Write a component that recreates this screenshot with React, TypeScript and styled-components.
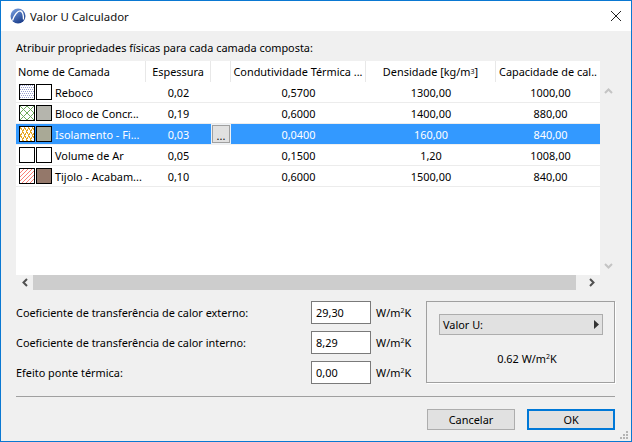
import styled, { createGlobalStyle } from "styled-components";

const GlobalStyle = createGlobalStyle`
  html, body {
    margin: 0;
    padding: 0;
    background: #f0f0f0;
  }
  * {
    box-sizing: border-box;
  }
`;

type Hatch = "dots" | "cross" | "wave" | "none" | "diag";

type Layer = {
  name: string;
  thickness: string;
  conductivity: string;
  density: string;
  capacity: string;
  hatch: Hatch;
  fill: string;
  selected?: boolean;
};

const layers: Layer[] = [
  { name: "Reboco", thickness: "0,02", conductivity: "0,5700", density: "1300,00", capacity: "1000,00", hatch: "dots", fill: "#ffffff" },
  { name: "Bloco de Concr...", thickness: "0,19", conductivity: "0,6000", density: "1400,00", capacity: "880,00", hatch: "cross", fill: "#b5b5ad" },
  { name: "Isolamento - Fi...", thickness: "0,03", conductivity: "0,0400", density: "160,00", capacity: "840,00", hatch: "wave", fill: "#a9a996", selected: true },
  { name: "Volume de Ar", thickness: "0,05", conductivity: "0,1500", density: "1,20", capacity: "1008,00", hatch: "none", fill: "#ffffff" },
  { name: "Tijolo - Acabam...", thickness: "0,10", conductivity: "0,6000", density: "1500,00", capacity: "840,00", hatch: "diag", fill: "#94786a" },
];

const coefficients = [
  { label: "Coeficiente de transferência de calor externo:", value: "29,30" },
  { label: "Coeficiente de transferência de calor interno:", value: "8,29" },
  { label: "Efeito ponte térmica:", value: "0,00" },
];

// each hatch is a 1px pattern, one colour and a test per pixel
const hatches: Record<Hatch, { color: string; on: (x: number, y: number) => boolean }> = {
  none: { color: "#fff", on: () => false },
  dots: { color: "#9aa0d0", on: (x, y) => y % 2 === 0 && (x + y / 2) % 2 === 0 },
  cross: { color: "#6dab5a", on: (x, y) => (x - y + 14) % 7 === 0 || (x + y + 1) % 7 === 0 },
  wave: { color: "#e6a726", on: (x, y) => (x * 2 + y) % 8 < 2 || (x * 2 - y + 32) % 8 < 2 },
  diag: { color: "#fa8078", on: (x, y) => (x + y) % 4 === 3 },
};

const HatchSwatch = ({ hatch }: { hatch: Hatch }) => {
  const { color, on } = hatches[hatch];
  const cells = Array.from({ length: 196 }, (_, i) => ({ x: i % 14, y: Math.floor(i / 14) }));
  return (
    <Swatch>
      <svg width="14" height="14" viewBox="0 0 14 14" shapeRendering="crispEdges">
        {cells
          .filter((c) => on(c.x, c.y))
          .map((c) => (
            <rect key={`${c.x}-${c.y}`} x={c.x} y={c.y} width="1" height="1" fill={color} />
          ))}
      </svg>
    </Swatch>
  );
};

const App = () => {
  return (
    <Window>
      <GlobalStyle />
      <TitleBar>
        <TitleGroup>
          <svg width="16" height="16" viewBox="0 0 16 16">
            <defs>
              <linearGradient id="sphere" x1="0" y1="0" x2="0.6" y2="1">
                <stop offset="0" stopColor="#7fa6e6" />
                <stop offset="1" stopColor="#1c3f8c" />
              </linearGradient>
            </defs>
            <circle cx="8" cy="8" r="7.5" fill="url(#sphere)" />
            <path d="M2.5 12.5C4 7 8 2.5 10.5 3C13 3.5 13.5 8 13.5 11.5" stroke="#fff" strokeWidth="1.3" fill="none" />
          </svg>
          <Title>Valor U Calculador</Title>
        </TitleGroup>
        <svg width="12" height="12" viewBox="0 0 12 12">
          <path d="M1 1L11 11M11 1L1 11" stroke="#222" strokeWidth="1" fill="none" />
        </svg>
      </TitleBar>

      <Body>
        <Intro>Atribuir propriedades físicas para cada camada composta:</Intro>

        <TableArea>
          <Table>
            <HeaderRow>
              <HeaderCell $align="left">Nome de Camada</HeaderCell>
              <HeaderCell>Espessura</HeaderCell>
              <HeaderCell />
              <HeaderCell>Condutividade Térmica ...</HeaderCell>
              <HeaderCell>
                Densidade [kg/m<Sup>3</Sup>]
              </HeaderCell>
              <HeaderCell $last>Capacidade de cal..</HeaderCell>
            </HeaderRow>
            {layers.map((layer) => (
              <Row key={layer.name} $selected={layer.selected}>
                <NameCell>
                  <HatchSwatch hatch={layer.hatch} />
                  <Swatch style={{ background: layer.fill }} />
                  <LayerName>{layer.name}</LayerName>
                </NameCell>
                <Cell>{layer.thickness}</Cell>
                <Cell>{layer.selected && <DotsButton>...</DotsButton>}</Cell>
                <Cell>{layer.conductivity}</Cell>
                <Cell>{layer.density}</Cell>
                <CapacityCell>{layer.capacity}</CapacityCell>
              </Row>
            ))}
          </Table>
          <VerticalBar>
            <svg width="9" height="6" viewBox="0 0 9 6">
              <path d="M1 5L4.5 1.5L8 5" stroke="#c4c4c4" strokeWidth="2" fill="none" />
            </svg>
            <svg width="9" height="6" viewBox="0 0 9 6">
              <path d="M1 1L4.5 4.5L8 1" stroke="#c4c4c4" strokeWidth="2" fill="none" />
            </svg>
          </VerticalBar>
        </TableArea>

        <HorizontalBar>
          <ArrowSlot>
            <svg width="6" height="9" viewBox="0 0 6 9">
              <path d="M5 1L1.5 4.5L5 8" stroke="#505050" strokeWidth="2" fill="none" />
            </svg>
          </ArrowSlot>
          <Track />
          <ArrowSlot $wide>
            <svg width="6" height="9" viewBox="0 0 6 9">
              <path d="M1 1L4.5 4.5L1 8" stroke="#505050" strokeWidth="2" fill="none" />
            </svg>
          </ArrowSlot>
        </HorizontalBar>

        <BottomArea>
          <Coefficients>
            {coefficients.map((item) => (
              <CoefRow key={item.label}>
                <CoefLabel>{item.label}</CoefLabel>
                <ValueInput>{item.value}</ValueInput>
                <Unit>
                  W/m<Sup>2</Sup>K
                </Unit>
              </CoefRow>
            ))}
          </Coefficients>
          <ResultBox>
            <PopupButton>
              Valor U:
              <svg width="5" height="9" viewBox="0 0 5 9">
                <path d="M0 0L5 4.5L0 9Z" fill="#333" />
              </svg>
            </PopupButton>
            <ResultValue>
              0.62 W/m<Sup>2</Sup>K
            </ResultValue>
          </ResultBox>
        </BottomArea>

        <Separator />

        <Footer>
          <DialogButton>Cancelar</DialogButton>
          <DialogButton $primary>OK</DialogButton>
        </Footer>
      </Body>
      <Grip>
        <svg width="12" height="12" viewBox="0 0 12 12">
          <path d="M8 2h2v2h-2zM5 5h2v2h-2zM8 5h2v2h-2zM2 8h2v2h-2zM5 8h2v2h-2zM8 8h2v2h-2z" fill="#b4b4b4" />
        </svg>
      </Grip>
    </Window>
  );
};

const Window = styled.div`
  position: relative;
  width: 632px;
  height: 442px;
  display: flex;
  flex-direction: column;
  border: 1px solid #0a78d2;
  background: #f0f0f0;
  font-family: "Noto Sans", "Liberation Sans", sans-serif;
  font-size: 10.9px;
  color: #000;
  overflow: hidden;
`;

const TitleBar = styled.div`
  height: 30px;
  flex: none;
  background: #fff;
  display: flex;
  align-items: center;
  justify-content: space-between;
  padding: 0 9px 0 9px;
`;

const TitleGroup = styled.div`
  display: flex;
  align-items: center;
  gap: 4px;
`;

const Title = styled.span`
  font-size: 11.4px;
  color: #111;
`;

const Body = styled.div`
  flex: 1;
  display: flex;
  flex-direction: column;
  padding: 0 16px 0 15px;
`;

const Intro = styled.div`
  height: 30px;
  line-height: 15px;
  padding-top: 9px;
`;

const TableArea = styled.div`
  display: flex;
  height: 214px;
  margin-right: -16px;
`;

const Table = styled.div`
  width: 584px;
  flex: none;
  background: #fff;
`;

const columns = "130px 65px 20px 135px 130px 104px";

const HeaderRow = styled.div`
  display: grid;
  grid-template-columns: ${columns};
  height: 21px;
`;

const HeaderCell = styled.div<{ $align?: string; $last?: boolean }>`
  display: flex;
  align-items: center;
  justify-content: ${(p) => (p.$align === "left" ? "flex-start" : "center")};
  padding-left: ${(p) => (p.$align === "left" ? "2px" : "0")};
  border-right: ${(p) => (p.$last ? "none" : "1px solid #e8e8e8")};
  white-space: nowrap;
  overflow: hidden;
`;

const Row = styled.div<{ $selected?: boolean }>`
  display: grid;
  grid-template-columns: ${columns};
  height: 21px;
  align-items: center;
  border-bottom: 1px solid ${(p) => (p.$selected ? "#f0f0f0" : "#ececec")};
  background: ${(p) => (p.$selected ? "#3399ff" : "#fff")};
  color: ${(p) => (p.$selected ? "#fff" : "#000")};
`;

const Cell = styled.div`
  display: flex;
  justify-content: center;
  align-items: center;
  white-space: nowrap;
`;

const CapacityCell = styled(Cell)`
  padding-left: 5px;
`;

const NameCell = styled.div`
  display: flex;
  align-items: center;
  gap: 1px;
  padding-left: 3px;
  white-space: nowrap;
`;

const LayerName = styled.span`
  margin-left: 2px;
`;

const Swatch = styled.span`
  width: 16px;
  height: 16px;
  flex: none;
  border: 1px solid #000;
  background: #fff;
  display: block;
  svg {
    display: block;
  }
`;

const DotsButton = styled.div`
  width: 18px;
  height: 18px;
  background: #e1e1e1;
  border: 1px solid #a0a0a0;
  box-shadow: 0 0 0 1px #eef2f6;
  color: #111;
  display: flex;
  align-items: flex-end;
  justify-content: center;
  line-height: 13px;
`;

const VerticalBar = styled.div`
  width: 16px;
  display: flex;
  flex-direction: column;
  justify-content: space-between;
  align-items: center;
  padding: 27px 0 6px;
`;

const HorizontalBar = styled.div`
  display: flex;
  height: 15px;
  width: 584px;
`;

const ArrowSlot = styled.div<{ $wide?: boolean }>`
  width: ${(p) => (p.$wide ? "24px" : "17px")};
  display: flex;
  align-items: center;
  justify-content: center;
  svg {
    margin-left: ${(p) => (p.$wide ? "8px" : "0")};
  }
`;

const Track = styled.div`
  flex: 1;
  background: #cdcdcd;
`;

const BottomArea = styled.div`
  display: flex;
  margin-top: 11px;
  height: 83px;
`;

const Coefficients = styled.div`
  display: flex;
  flex-direction: column;
  gap: 7px;
  width: 410px;
`;

const CoefRow = styled.div`
  display: flex;
  align-items: center;
  height: 23px;
`;

const CoefLabel = styled.div`
  width: 295px;
`;

const ValueInput = styled.div`
  width: 60px;
  height: 23px;
  background: #fff;
  border: 1px solid #7a7a7a;
  display: flex;
  align-items: center;
  padding-left: 4px;
`;

const Unit = styled.div`
  margin-left: 5px;
`;

const Sup = styled.sup`
  font-size: 7px;
  line-height: 0;
  vertical-align: 4px;
`;

const ResultBox = styled.div`
  width: 189px;
  height: 82px;
  border: 1px solid #a0a0a0;
  box-shadow: 1px 1px 0 #fff;
  display: flex;
  flex-direction: column;
  padding: 12px 11px 0 12px;
`;

const PopupButton = styled.div`
  height: 21px;
  background: #e1e1e1;
  border: 1px solid #adadad;
  display: flex;
  align-items: center;
  justify-content: space-between;
  padding: 0 3px 0 3px;
`;

const ResultValue = styled.div`
  text-align: center;
  margin-top: 16px;
  padding-left: 12px;
`;

const Separator = styled.div`
  height: 1px;
  background: #a0a0a0;
  margin-top: 12px;
`;

const Footer = styled.div`
  display: flex;
  justify-content: flex-end;
  gap: 12px;
  margin-top: 12px;
`;

const DialogButton = styled.div<{ $primary?: boolean }>`
  width: 88px;
  height: 21px;
  background: #e1e1e1;
  border: ${(p) => (p.$primary ? "2px solid #0078d7" : "1px solid #adadad")};
  display: flex;
  align-items: center;
  justify-content: center;
`;

const Grip = styled.div`
  position: absolute;
  right: 1px;
  bottom: 0;
  line-height: 0;
`;

export default App;
